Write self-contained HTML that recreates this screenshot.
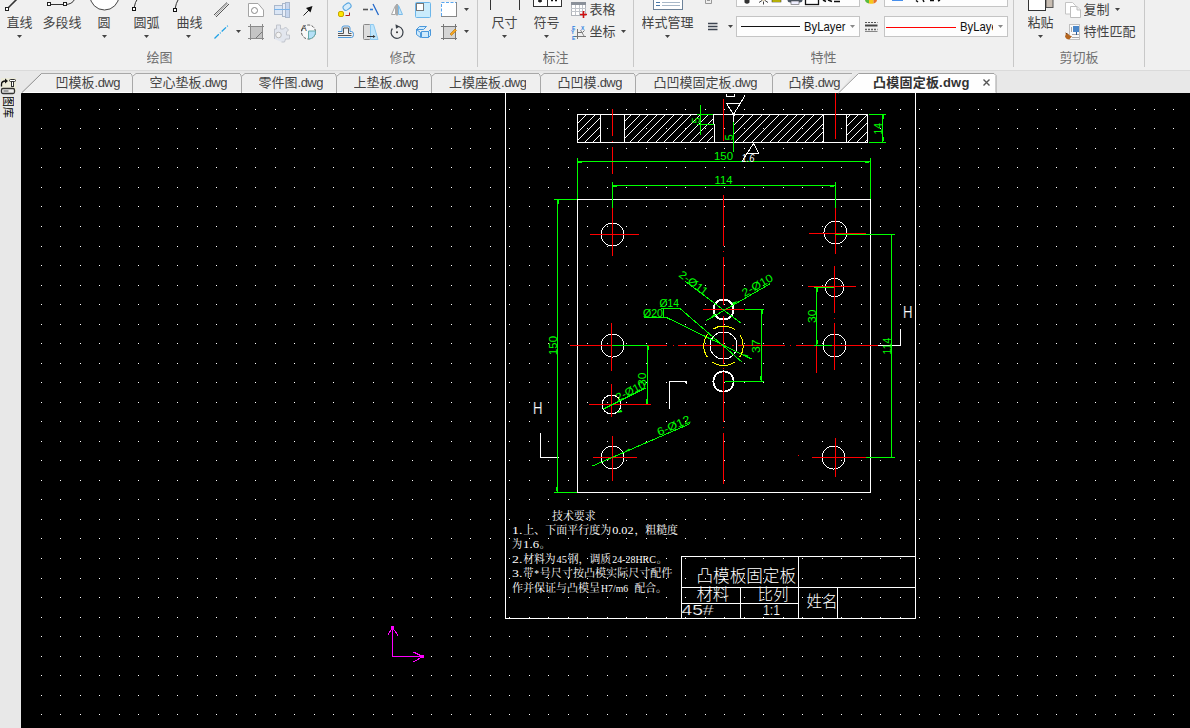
<!DOCTYPE html><html lang="zh"><head><meta charset="utf-8"><title>CAD</title><style>
html,body{margin:0;padding:0}
body{width:1190px;height:728px;overflow:hidden;background:#f0f0f0;position:relative;font-family:"Liberation Sans","Noto Sans CJK SC",sans-serif}
svg{position:absolute;left:0;top:0;display:block}
.l{position:absolute;white-space:nowrap;font-size:13px;line-height:18px;color:#444;overflow:hidden}
.g{color:#707070}
.by{color:#111;font-size:13px;transform:scaleX(0.87);transform-origin:0 0}
.sa{font-size:8.5px;color:#222;line-height:10px}
.tab{color:#444}
.tab i{font-style:normal;letter-spacing:-0.5px}
.act{font-weight:bold;color:#333;letter-spacing:0.22px}
.vt{writing-mode:vertical-rl;font-size:11px;line-height:13px;color:#222;width:13px;text-orientation:sideways;color:#000}
text{white-space:pre}
.cad{font-family:"Liberation Sans",sans-serif}
.song{font-family:"Liberation Serif","Noto Serif CJK SC",serif}
.cadcjk{font-family:"Liberation Sans","Noto Sans CJK SC",sans-serif;font-weight:300}
.ui{font-family:"Liberation Sans",sans-serif}
</style></head><body><svg class="cv" width="1190" height="728" viewBox="0 0 1190 728" shape-rendering="crispEdges"><rect x="21" y="93" width="1169" height="635" fill="#000"/><defs><path id="gr" d="M41 0h1M60 0h1M80 0h1M99 0h1M119 0h1M138 0h1M158 0h1M177 0h1M197 0h1M216 0h1M236 0h1M255 0h1M275 0h1M294 0h1M314 0h1M333 0h1M353 0h1M373 0h1M392 0h1M412 0h1M431 0h1M451 0h1M470 0h1M490 0h1M509 0h1M529 0h1M548 0h1M568 0h1M587 0h1M607 0h1M626 0h1M646 0h1M666 0h1M685 0h1M705 0h1M724 0h1M744 0h1M763 0h1M783 0h1M802 0h1M822 0h1M841 0h1M861 0h1M880 0h1M900 0h1M919 0h1M939 0h1M959 0h1M978 0h1M998 0h1M1017 0h1M1037 0h1M1056 0h1M1076 0h1M1095 0h1M1115 0h1M1134 0h1M1154 0h1M1173 0h1" stroke="#fff" stroke-width="1" fill="none"/></defs><use href="#gr" y="109.5"/><use href="#gr" y="128.5"/><use href="#gr" y="148.5"/><use href="#gr" y="167.5"/><use href="#gr" y="187.5"/><use href="#gr" y="206.5"/><use href="#gr" y="226.5"/><use href="#gr" y="246.5"/><use href="#gr" y="265.5"/><use href="#gr" y="285.5"/><use href="#gr" y="304.5"/><use href="#gr" y="324.5"/><use href="#gr" y="343.5"/><use href="#gr" y="363.5"/><use href="#gr" y="382.5"/><use href="#gr" y="402.5"/><use href="#gr" y="421.5"/><use href="#gr" y="441.5"/><use href="#gr" y="460.5"/><use href="#gr" y="480.5"/><use href="#gr" y="499.5"/><use href="#gr" y="519.5"/><use href="#gr" y="538.5"/><use href="#gr" y="558.5"/><use href="#gr" y="578.5"/><use href="#gr" y="597.5"/><use href="#gr" y="617.5"/><use href="#gr" y="636.5"/><use href="#gr" y="656.5"/><use href="#gr" y="675.5"/><use href="#gr" y="695.5"/><use href="#gr" y="714.5"/><clipPath id="h1"><rect x="578" y="115" width="22" height="27"/></clipPath><path clip-path="url(#h1)" d="M569.5 114.5L541.5 142.5M578.5 114.5L550.5 142.5M586.5 114.5L558.5 142.5M595.5 114.5L567.5 142.5M603.5 114.5L575.5 142.5M612.5 114.5L584.5 142.5M620.5 114.5L592.5 142.5" stroke="#fff" stroke-width="1" fill="none"/><clipPath id="h2"><rect x="625" y="115" width="88" height="27"/></clipPath><path clip-path="url(#h2)" d="M622.5 114.5L594.5 142.5M631.5 114.5L603.5 142.5M640.5 114.5L612.5 142.5M648.5 114.5L620.5 142.5M657.5 114.5L629.5 142.5M665.5 114.5L637.5 142.5M674.5 114.5L646.5 142.5M683.5 114.5L655.5 142.5M691.5 114.5L663.5 142.5M700.5 114.5L672.5 142.5M708.5 114.5L680.5 142.5M717.5 114.5L689.5 142.5M726.5 114.5L698.5 142.5M734.5 114.5L706.5 142.5" stroke="#fff" stroke-width="1" fill="none"/><clipPath id="h3"><rect x="734" y="115" width="89" height="27"/></clipPath><path clip-path="url(#h3)" d="M727.5 114.5L699.5 142.5M735.5 114.5L707.5 142.5M744.5 114.5L716.5 142.5M753.5 114.5L725.5 142.5M762.5 114.5L734.5 142.5M770.5 114.5L742.5 142.5M779.5 114.5L751.5 142.5M788.5 114.5L760.5 142.5M797.5 114.5L769.5 142.5M805.5 114.5L777.5 142.5M814.5 114.5L786.5 142.5M823.5 114.5L795.5 142.5M832.5 114.5L804.5 142.5M840.5 114.5L812.5 142.5M849.5 114.5L821.5 142.5" stroke="#fff" stroke-width="1" fill="none"/><clipPath id="h4"><rect x="847" y="115" width="20" height="27"/></clipPath><path clip-path="url(#h4)" d="M841.5 114.5L813.5 142.5M850.5 114.5L822.5 142.5M858.5 114.5L830.5 142.5M867.5 114.5L839.5 142.5M875.5 114.5L847.5 142.5M884.5 114.5L856.5 142.5M892.5 114.5L864.5 142.5" stroke="#fff" stroke-width="1" fill="none"/><g stroke="#fff" stroke-width="1" fill="none"><path d="M505.5 93V619M505 618.5H916M915.5 93V619M577 114.5H868M577 142.5H868M577.5 114V143M867.5 114V143M600.5 114V143M624.5 114V143M733.5 114V143M823.5 114V143M846.5 114V143M713.5 114V125M714.5 124V143M577 199.5H871M577 492.5H871M577.5 199V493M870.5 199V493M878 345.5H901M900.5 329V346M540.5 433V458M540 457.5H559M669 381.5H687M669.5 381V409M686.5 381V384M726.5 93.5L726.5 96.5M726.5 96.5L734.5 96.5M734.5 96.5L734.5 93.5M726.5 103.5L740.5 103.5M758.5 153.5L746.0 153.5M681 556.5H916M681 587.5H916M681 603.5H799M681.5 556V619M740.5 587V619M798.5 556V619M837.5 587V619"/><circle cx="612.5" cy="234.5" r="11.5"/><circle cx="835.5" cy="232.5" r="11.5"/><circle cx="612.5" cy="345.5" r="11.5"/><circle cx="834.5" cy="345.5" r="11.5"/><circle cx="612.5" cy="457.5" r="11.5"/><circle cx="833.5" cy="457.5" r="11.5"/><circle cx="834.5" cy="287.5" r="9.3"/><circle cx="611.5" cy="404.5" r="9.5"/><circle cx="723.5" cy="345.5" r="13.5"/><circle cx="723.5" cy="309.5" r="10" stroke-width="1.7"/><circle cx="723.5" cy="381.5" r="10.2" stroke-width="1.7"/><path stroke-width="1" d="M726.5 103.5L733.5 114.5"/><path stroke-width="1" d="M733.5 114.5L745.0 95.5"/><path stroke-width="1" d="M759.0 153.5L753.5 143.5"/><path stroke-width="1" d="M753.5 143.5L741.5 162.0"/></g><g stroke="#f00" stroke-width="1" fill="none"><path d="M612.5 109V136M612.5 141V142M612.5 147V174M723.5 99V141M835.5 93V139M612.5 208V256M590 234.5H639M611.5 323V371M611.5 384V417M589 404.5H651M612.5 436V481M593 457.5H637M570 345.5H667M673 345.5H674M678 345.5H726M732 345.5H734M738 345.5H785M790 345.5H791M796 345.5H878M723.5 195V246M723.5 251V252M723.5 257V305M723.5 316V364M723.5 368V369M723.5 372V422M723.5 427V428M723.5 433V484M703 309.5H744M835.5 208V254M809 233.5H866M834.5 266V313M834.5 318V319M834.5 323V370M808 286.5H856M816.5 345V373M835.5 438V477M812 457.5H866M798 455.5H799"/></g><g stroke="#0f0" stroke-width="1" fill="none"><path d="M577.5 158V199M870.5 158V199M577 161.5H870M578 162.5H582M865 162.5H869M612.5 182V208M835.5 182V208M612 185.5H835M613 186.5H617M830 186.5H834M554 199.5H577M554 492.5H577M557.5 199V492M558.5 200V204M556.5 487V491M835 234.5H895M866 457.5H895M891.5 234V457M869 114.5H886M869 142.5H886M882.5 114V142M883.5 115V119M883.5 137V141M700.5 105V135M697 114.5H713M697 124.5H714M733.5 122V152M814 287.5H834M814 345.5H832M816.5 287V345M817.5 288V292M817.5 340V344M745 309.5H764M725 381.5H764M761.5 309V381M760.5 376V380M762.5 310V314M612 345.5H648M647.5 345V404M646.5 399V404M648.5 346V350M660.5 308.5L680.0 308.5M643.5 317.5L666.5 317.5M663.5 309V317"/><path stroke-width="1" d="M685.5 281.5L741.5 323.5"/><path stroke-width="1" d="M706.5 320.5L770.5 283.5"/><path stroke-width="1" d="M680.0 308.5L742.5 362.5"/><path stroke-width="1" d="M666.5 317.5L751.5 359.0"/><path stroke-width="1" d="M603.5 409.0L645.5 388.0"/><path stroke-width="1" d="M592.5 466.0L690.5 423.5"/></g><g stroke="#ff0" stroke-width="1" fill="none"><path d=""/><circle cx="723.5" cy="345.8" r="19.7" stroke-dasharray="24.2 6.75" stroke-dashoffset="12.1"/></g><g stroke="#f0f" stroke-width="1" fill="none"><path d="M392.5 626V657M392 656.5H423"/><path stroke-width="1" d="M392.5 627.5L387.5 635.5"/><path stroke-width="1" d="M392.5 627.5L398.0 635.5"/><path stroke-width="1" d="M422.5 656.5L413.5 652.0"/><path stroke-width="1" d="M422.5 656.5L413.5 662.0"/></g><g fill="#0f0" stroke="none" shape-rendering="geometricPrecision"><path d="M710 318l4.5-4.5l1.5 2.5zM738 301l-4.5 4l-1.5-2.5zM742.5 354l6 1.5l-1 2.5zM616.5 413l4.5-3.5l1.5 2.5zM625 451.5l4-3l1 2.5z"/></g><g fill="#f0f"><rect x="391" y="626" width="3" height="3"/><rect x="421" y="655" width="3" height="3"/></g><g text-rendering="optimizeSpeed"><text x="714" y="160" font-size="11" fill="#0f0" class="cad" textLength="19" lengthAdjust="spacingAndGlyphs">150</text><text x="714.5" y="184" font-size="11" fill="#0f0" class="cad" textLength="18" lengthAdjust="spacingAndGlyphs">114</text><text x="557" y="355" font-size="11" fill="#0f0" class="cad" transform="rotate(-90 557 355)" textLength="19" lengthAdjust="spacingAndGlyphs">150</text><text x="890.5" y="354.5" font-size="11" fill="#0f0" class="cad" transform="rotate(-90 890.5 354.5)" textLength="17" lengthAdjust="spacingAndGlyphs">114</text><text x="881.5" y="134.5" font-size="11" fill="#0f0" class="cad" transform="rotate(-90 881.5 134.5)" textLength="11.5" lengthAdjust="spacingAndGlyphs">14</text><text x="700" y="123.5" font-size="11" fill="#0f0" class="cad" transform="rotate(-90 700 123.5)">5</text><text x="733" y="140.5" font-size="11" fill="#0f0" class="cad" transform="rotate(-90 733 140.5)">5</text><text x="816" y="323" font-size="11" fill="#0f0" class="cad" transform="rotate(-90 816 323)" textLength="13.5" lengthAdjust="spacingAndGlyphs">30</text><text x="760" y="353" font-size="11" fill="#0f0" class="cad" transform="rotate(-90 760 353)" textLength="13.5" lengthAdjust="spacingAndGlyphs">37</text><text x="646" y="386" font-size="11" fill="#0f0" class="cad" transform="rotate(-90 646 386)" textLength="13.5" lengthAdjust="spacingAndGlyphs">30</text><text x="659.5" y="307" font-size="11" fill="#0f0" class="cad" textLength="19.5" lengthAdjust="spacingAndGlyphs">Ø14</text><text x="643" y="316.5" font-size="11" fill="#0f0" class="cad" textLength="20" lengthAdjust="spacingAndGlyphs">Ø20</text><text x="678" y="276" font-size="11" fill="#0f0" class="cad" transform="rotate(37 678 276)" textLength="33" lengthAdjust="spacingAndGlyphs">2-Ø11</text><text x="744.5" y="297" font-size="11" fill="#0f0" class="cad" transform="rotate(-30 744.5 297)" textLength="34" lengthAdjust="spacingAndGlyphs">2-Ø10</text><text x="618" y="401.5" font-size="11" fill="#0f0" class="cad" transform="rotate(-27 618 401.5)" textLength="32" lengthAdjust="spacingAndGlyphs">2-Ø10</text><text x="659" y="436" font-size="11" fill="#0f0" class="cad" transform="rotate(-23.5 659 436)" textLength="35" lengthAdjust="spacingAndGlyphs">6-Ø12</text><text x="741.5" y="161.5" font-size="10.5" fill="#fff" class="cad" textLength="13" lengthAdjust="spacingAndGlyphs" font-style="italic">1.6</text><text x="903" y="318" font-size="16.5" fill="#fff" class="cad" textLength="9.5" lengthAdjust="spacingAndGlyphs" stroke="#000" stroke-width=".22">H</text><text x="533" y="414" font-size="16.5" fill="#fff" class="cad" textLength="9.5" lengthAdjust="spacingAndGlyphs" stroke="#000" stroke-width=".22">H</text><text y="520" font-size="11" fill="#fff" class="song"><tspan x="552" textLength="43.52" lengthAdjust="spacingAndGlyphs">技术要求</tspan></text><text y="533.5" font-size="11" fill="#fff" class="song"><tspan x="512" textLength="10.33" lengthAdjust="spacingAndGlyphs">1.</tspan><tspan x="523.13" textLength="88.04" lengthAdjust="spacingAndGlyphs">上、下面平行度为</tspan><tspan x="612.17" textLength="21.46" lengthAdjust="spacingAndGlyphs">0.02</tspan><tspan x="634.43" textLength="43.52" lengthAdjust="spacingAndGlyphs">，粗糙度</tspan></text><text y="548" font-size="11" fill="#fff" class="song"><tspan x="512" textLength="10.13" lengthAdjust="spacingAndGlyphs">为</tspan><tspan x="523.13" textLength="15.89" lengthAdjust="spacingAndGlyphs">1.6</tspan><tspan x="539.83" textLength="10.13" lengthAdjust="spacingAndGlyphs">。</tspan></text><text y="562.5" font-size="11" fill="#fff" class="song"><tspan x="512" textLength="10.33" lengthAdjust="spacingAndGlyphs">2.</tspan><tspan x="523.13" textLength="32.39" lengthAdjust="spacingAndGlyphs">材料为</tspan><tspan x="556.52" textLength="10.33" lengthAdjust="spacingAndGlyphs">45</tspan><tspan x="567.65" textLength="43.52" lengthAdjust="spacingAndGlyphs">钢，调质</tspan><tspan x="612.17" textLength="43.72" lengthAdjust="spacingAndGlyphs">24-28HRC</tspan><tspan x="656.69" textLength="10.13" lengthAdjust="spacingAndGlyphs">。</tspan></text><text y="577" font-size="11" fill="#fff" class="song"><tspan x="512" textLength="10.33" lengthAdjust="spacingAndGlyphs">3.</tspan><tspan x="523.13" textLength="10.13" lengthAdjust="spacingAndGlyphs">带</tspan><tspan x="534.26" textLength="4.77" lengthAdjust="spacingAndGlyphs">*</tspan><tspan x="539.83" textLength="132.56" lengthAdjust="spacingAndGlyphs">号尺寸按凸模实际尺寸配件</tspan></text><text y="591.5" font-size="11" fill="#fff" class="song"><tspan x="512" textLength="88.04" lengthAdjust="spacingAndGlyphs">作并保证与凸模呈</tspan><tspan x="601.04" textLength="27.03" lengthAdjust="spacingAndGlyphs">H7/m6</tspan><tspan x="634.43" textLength="32.39" lengthAdjust="spacingAndGlyphs">配合。</tspan></text><text x="696.5" y="582" font-size="16.5" fill="#fff" class="cadcjk" textLength="99.5" lengthAdjust="spacingAndGlyphs">凸模板固定板</text><text x="696.5" y="600" font-size="16" fill="#fff" class="cadcjk" textLength="32.5" lengthAdjust="spacingAndGlyphs">材料</text><text x="757.5" y="599.5" font-size="16" fill="#fff" class="cadcjk" textLength="31" lengthAdjust="spacingAndGlyphs">比列</text><text x="806.5" y="606.5" font-size="16" fill="#fff" class="cadcjk" textLength="31" lengthAdjust="spacingAndGlyphs">姓名</text><text x="681.5" y="615" font-size="15" fill="#fff" class="cadcjk" textLength="32" lengthAdjust="spacingAndGlyphs" stroke="#000" stroke-width=".22">45#</text><text x="763" y="614.5" font-size="14" fill="#fff" class="cadcjk" textLength="17" lengthAdjust="spacingAndGlyphs" stroke="#000" stroke-width=".22">1:1</text></g></svg><svg class="tb" width="1190" height="728" viewBox="0 0 1190 728"><rect x="0" y="70" width="1190" height="1" fill="#dadada"/><rect x="0" y="71" width="1190" height="22" fill="#e8e8e8"/><rect x="0" y="93" width="21" height="635" fill="#e8e8e8"/><path d="M21.5 93L41.5 73.5H853L838.5 93z" fill="#efefef"/><rect x="21" y="92" width="818" height="1" fill="#fff"/><path d="M838.5 93L858.5 73.5H994.5l1.5 1.5V93z" fill="#fefefe"/><path d="M838.5 93L858.5 73.5H994l2 2V93" fill="none" stroke="#a0a0a0"/><rect x="839.5" y="92" width="156" height="1" fill="#fdfdfd"/><path d="M21.5 93L41.5 73.5H131" stroke="#8c8c8c" fill="none"/><path d="M132.5 93V76.5l3.5-3H240" stroke="#a8a8a8" fill="none"/><path d="M130.5 73.5l1.5 1.5v1.5" stroke="#a8a8a8" fill="none"/><path d="M241.5 93V76.5l3.5-3H335" stroke="#a8a8a8" fill="none"/><path d="M239.5 73.5l1.5 1.5v1.5" stroke="#a8a8a8" fill="none"/><path d="M336.5 93V76.5l3.5-3H430" stroke="#a8a8a8" fill="none"/><path d="M334.5 73.5l1.5 1.5v1.5" stroke="#a8a8a8" fill="none"/><path d="M431.5 93V76.5l3.5-3H539" stroke="#a8a8a8" fill="none"/><path d="M429.5 73.5l1.5 1.5v1.5" stroke="#a8a8a8" fill="none"/><path d="M540.5 93V76.5l3.5-3H634" stroke="#a8a8a8" fill="none"/><path d="M538.5 73.5l1.5 1.5v1.5" stroke="#a8a8a8" fill="none"/><path d="M635.5 93V76.5l3.5-3H771" stroke="#a8a8a8" fill="none"/><path d="M633.5 73.5l1.5 1.5v1.5" stroke="#a8a8a8" fill="none"/><path d="M772.5 93V76.5l3.5-3H852" stroke="#a8a8a8" fill="none"/><path d="M770.5 73.5l1.5 1.5v1.5" stroke="#a8a8a8" fill="none"/><path d="M41.5 73.5H130.5" stroke="#a8a8a8" fill="none"/><path d="M983.5 79.5l6 6M989.5 79.5l-6 6" stroke="#555" stroke-width="1.400" fill="none"/><rect x="1" y="78" width="15" height="14" fill="#ecebd9"/><path d="M1.5 86.5v-2q0-3.5 4-3.5" stroke="#111" stroke-width="1.300" fill="none"/><path d="M5 78.5l3 2.5l-3 2.5z" fill="#111"/><rect x="9.5" y="79.5" width="6" height="2" rx="1" fill="#fff" stroke="#333"/><rect x="11.5" y="81.5" width="2" height="5" fill="#fff" stroke="#333"/><rect x="1.5" y="88.5" width="13" height="5" rx="1.5" fill="#eee" stroke="#333" stroke-width="1.300"/><path d="M3.5 91h5" stroke="#555"/></svg><svg class="rb" width="1190" height="70" viewBox="0 0 1190 70"><rect x="327" y="0" width="1" height="67" fill="#c8c8c8"/><rect x="477" y="0" width="1" height="67" fill="#c8c8c8"/><rect x="633" y="0" width="1" height="67" fill="#c8c8c8"/><rect x="1013" y="0" width="1" height="67" fill="#c8c8c8"/><rect x="1144" y="0" width="1" height="67" fill="#c8c8c8"/><path d="M17.0 35h5l-2.5 3z" fill="#444"/><path d="M102.0 35h5l-2.5 3z" fill="#444"/><path d="M144.0 35h5l-2.5 3z" fill="#444"/><path d="M186.0 35h5l-2.5 3z" fill="#444"/><path d="M502.0 35h5l-2.5 3z" fill="#444"/><path d="M544.0 35h5l-2.5 3z" fill="#444"/><path d="M665.0 35h5l-2.5 3z" fill="#444"/><path d="M1038.0 35h5l-2.5 3z" fill="#444"/><path d="M236.0 30h5l-2.5 3z" fill="#444"/><path d="M464.0 8h5l-2.5 3z" fill="#444"/><path d="M464.0 30h5l-2.5 3z" fill="#444"/><path d="M621.0 30h5l-2.5 3z" fill="#444"/><path d="M728.0 25h5l-2.5 3z" fill="#444"/><path d="M1115.0 8h5l-2.5 3z" fill="#444"/><path d="M7.5 8.5L17 -1" stroke="#333" stroke-width="1.6" fill="none"/><rect x="5.5" y="7.5" width="3" height="3" fill="#fff" stroke="#222"/><path d="M50 4.5h15q7 0 9.5-5" stroke="#333" fill="none"/><rect x="47.5" y="2.5" width="3" height="3" fill="#fff" stroke="#222"/><rect x="63.5" y="2.5" width="3" height="3" fill="#fff" stroke="#222"/><circle cx="104.5" cy="-4.5" r="14.5" fill="#fff" stroke="#444"/><path d="M134 8q1-6 4-10" stroke="#333" fill="none"/><rect x="132.5" y="7.5" width="3" height="3" fill="#fff" stroke="#111" /><path d="M175 9q1-6 3.5-10" stroke="#333" fill="none"/><rect x="173.5" y="8.5" width="3" height="3" fill="#fff" stroke="#111"/><path d="M214 15L227 2.5M216 17L229 4" stroke="#555" stroke-width="1" fill="none"/><path d="M215 16L228 3.200" stroke="#aaa" stroke-width="1" fill="none"/><path d="M214.5 38.5L228.5 25" stroke="#1da1e6" stroke-width="1.300" stroke-dasharray="6 1.5 1 1.5" fill="none"/><path d="M248.5 3.5h9.5l5.5 6.5v6.5h-15z" fill="#fff" stroke="#a4a4a4"/><circle cx="254.5" cy="10.5" r="3" fill="#fff" stroke="#888"/><rect x="274.5" y="5.5" width="8" height="9" fill="#dbe6f5" stroke="#aab8cc"/><rect x="282.5" y="3.5" width="3" height="13" fill="#e8eef8" stroke="#aab8cc"/><rect x="285.5" y="2.5" width="4" height="15" fill="#c7d6ee" stroke="#aab8cc"/><path d="M274 9.5h16" stroke="#7ab4ea"/><path d="M303.5 15.5L310 9" stroke="#222" fill="none"/><path d="M312.5 6l-2 6.5l-4.5-4.5z" fill="#111"/><rect x="250" y="27" width="12" height="11" fill="#c4c4c4"/><path d="M248 26.5h16M248 38.5h16M250.5 24v16M262.5 24v16" stroke="#8a8a8a" fill="none"/><path d="M256 38l6-6" stroke="#777"/><path d="M274.5 39v-10h2v-4h4v4h3l2-2l3 3l-2 2v3h3v4h-4l-1 3h-3" fill="#e2e6ee" stroke="#c0c4cc"/><circle cx="278.5" cy="35" r="2.800" fill="#f4f4f4" stroke="#bbb"/><circle cx="308.5" cy="32" r="7" fill="#f8f8f8" stroke="#555" stroke-dasharray="3 1.5"/><path d="M308.5 31h7a7 7 0 0 1 -7 8z" fill="#b5e0f7" stroke="#6aa"/><rect x="338.5" y="11.5" width="5" height="5" rx="1.5" fill="#ffe600" stroke="#c8a800"/><rect x="343" y="4" width="8.5" height="5.5" rx="2.700" transform="rotate(-35 347 7)" fill="#d6ecfb" stroke="#58a6e0"/><path d="M345.5 15.5h4v-3" stroke="#b02020" fill="none"/><path d="M338 33.5h5.5v-5.5h5v5.5h3M338 35.5h13.5" stroke="#555" fill="none"/><path d="M338 31.5h4v-3.5q0-2 2-2h4q2 0 2 2v3.5h1.5q2 0 2 3t-2 3h-13.5" stroke="#3a8fd8" stroke-width=".9" fill="none"/><path d="M363 9.5h5" stroke="#555" stroke-width="1.600"/><path d="M370 9.5h3" stroke="#2d7ad6" stroke-width="1.600"/><path d="M373 4l5.5 11" stroke="#1f66c8" stroke-width="1.300"/><path d="M395.5 5.5v9h-4z" fill="#fff" stroke="#aaa"/><path d="M398.5 5.5v9h4z" fill="#c5e6fa" stroke="#7bbcea"/><path d="M397 4v11.5" stroke="#999" stroke-width="1.600"/><rect x="415.5" y="2.5" width="15" height="15" rx="1" fill="#c9ebfc" stroke="#6cb6ea"/><rect x="416.5" y="3.5" width="7" height="7" fill="#fff" stroke="#777"/><rect x="441.5" y="2.5" width="15" height="14" fill="#fff" stroke="#888"/><path d="M441.5 16V2.5H456" stroke="#fff" fill="none"/><path d="M441.5 16V2.5H456" stroke="#58a6f0" stroke-dasharray="3 1.5" fill="none"/><rect x="363.5" y="24.5" width="7" height="15" rx="1" fill="#ddd" stroke="#888"/><path d="M370.5 24.5h3l4.5 15h-7.5z" fill="#bfe5fb" stroke="#8cc8f0"/><path d="M367 36.5h7" stroke="#333"/><path d="M375.5 36.5l-2.5-1.5v3z" fill="#333"/><path d="M398.6 26.5A6 6 0 1 1 392.4 28.5" stroke="#3a4048" stroke-width="1.2" fill="none"/><path d="M395.5 24.2l4.2 2.3l-3.7 2.3z" fill="#3a4048"/><circle cx="397" cy="32.3" r="1" fill="#333"/><path d="M416.5 29.5l3-3h7l-3 3zM416.5 29.5v5l4 3v-5zM421.5 31.5h7v6h-7zM428.5 31.5l2-2v6l-2 2" fill="#cfeafc" stroke="#3a8fd8" stroke-width="0.900"/><rect x="443" y="26" width="13" height="12" fill="#d4d4d4"/><path d="M441 26.5h16M441 38.5h16M443.5 24v16M455.5 24v16" stroke="#777" fill="none"/><path d="M450 34l5-5l1.5 1.5l-5 5z" fill="#f5a623" stroke="#b87400" stroke-width=".6"/><path d="M490.5 0v10M519.5 0v10" stroke="#333"/><rect x="533.5" y="-5.5" width="28" height="12" fill="#fff" stroke="#333"/><path d="M547.5 0v7" stroke="#333"/><path d="M538 1h4M540 0v2.5M551 0.5h2M555 0.5h2" stroke="#111" stroke-width="1.400"/><rect x="571.5" y="2.5" width="14" height="13" fill="#fff" stroke="#b0b4ba"/><rect x="571" y="2" width="15" height="3" fill="#8a9099"/><path d="M571 8.5h15M571 11.5h15M575.5 5v10M579.5 5v10M582.5 5v10" stroke="#c0c4ca"/><path d="M580 14.5h7M583.5 11v7" stroke="#d01010" stroke-width="1.600"/><path d="M577.5 29v10M574 36.5h12M577.5 32.5h5l2-2" stroke="#777" fill="none"/><path d="M580.5 30l3.5 6" stroke="#888"/><text x="572" y="30" font-size="5" fill="#2a7fe0" font-weight="bold" class="ui">E</text><text x="581" y="30" font-size="5" fill="#2a7fe0" font-weight="bold" class="ui">X</text><text x="571" y="34" font-size="5" fill="#2a7fe0" font-weight="bold" class="ui">Y</text><text x="572" y="39.5" font-size="5" fill="#2a7fe0" font-weight="bold" class="ui">E</text><rect x="653.5" y="-4.5" width="29" height="14" fill="#fff" stroke="#6d8299"/><path d="M656 2.5h4M656 5.5h4" stroke="#4a78a8" stroke-width="1.200"/><path d="M662 2.5h18M662 5.5h18" stroke="#a8b8c8"/><path d="M705.5 0v3.5h6V0" stroke="#999" fill="#eee"/><path d="M707 0.5h3" stroke="#999"/><path d="M708 23.5h9.5M708 26.5h9.5M708 29.5h9.5" stroke="#3d4450" stroke-width="1.300"/><rect x="736.5" y="-14.5" width="123" height="21" fill="#fdfdfd" stroke="#c4c4c4"/><rect x="736.5" y="16.5" width="123" height="20" fill="#fdfdfd" stroke="#c4c4c4"/><rect x="884.5" y="-14.5" width="123" height="21" fill="#fdfdfd" stroke="#c4c4c4"/><rect x="884.5" y="16.5" width="123" height="20" fill="#fdfdfd" stroke="#c4c4c4"/><path d="M850.0 25h5l-2.5 3z" fill="#888"/><path d="M998.0 25h5l-2.5 3z" fill="#888"/><path d="M741 26.5h59" stroke="#111" stroke-width="1.200"/><path d="M886 27.5h70" stroke="#f00" stroke-width="1.200"/><path d="M744.5 0v2.5q2.5 2.5 5 0V0z" fill="#333"/><path d="M759 2.5l4.5-3l4.5 3M763.5 1.5v3" stroke="#444" fill="none"/><circle cx="763.5" cy="-1" r="2" fill="#f5e6c8"/><rect x="772" y="0" width="9" height="2" fill="#e8e000" stroke="#222" stroke-width=".5"/><path d="M787.5 0q0 2.5 3 2.5h9q3 0 3-2.5z" fill="#4a5563"/><rect x="791" y="1" width="8" height="3.5" fill="#eef" stroke="#555" stroke-width=".6"/><rect x="805.5" y="-8.5" width="13" height="13" fill="#fff" stroke="#111" stroke-width="1.300"/><path d="M823 0l3 1.5M828 0l4 1.5M834 1.5h6" stroke="#111" stroke-width="1.600"/><path d="M865 0a6 4 0 0 0 4 3.5V0z" fill="#5aba3c"/><path d="M869 3.5a6 4 0 0 0 4.5 0V0H869z" fill="#f7c61a"/><path d="M873.5 3.5a6 4 0 0 0 3.5-3.5h-3.5z" fill="#e8742a"/><path d="M892 0h11" stroke="#1a73e8" stroke-width="1.600"/><path d="M916 0.5l2 1.5M923 0l1 2M930 0.5l4 0M938 1l2-1" stroke="#111" stroke-width="1.5"/><path d="M865 22.5h12.5" stroke="#555" stroke-dasharray="2 1"/><path d="M865 25.5h12.5" stroke="#444" stroke-width="2"/><path d="M865 29.5h12.5" stroke="#666" stroke-dasharray="2 1" stroke-width="1.5"/><path d="M865 31.5h12.5" stroke="#888"/><rect x="1046" y="-3" width="7" height="10.5" fill="#c8bdb2" stroke="#555"/><rect x="1028.5" y="-5.5" width="17" height="16" fill="#fff" stroke="#333"/><path d="M1065.5 2.5h7l3 3v8.5h-10z" fill="#fff" stroke="#c4c4c4"/><path d="M1070.5 6.5h6.5l3.5 3.5v7.5h-10z" fill="#fff" stroke="#bdbdbd"/><path d="M1077 6.5v3.5h3.5" fill="#eee" stroke="#bdbdbd"/><rect x="1069.5" y="24.5" width="10" height="15" fill="#fafafa" stroke="#c0c0c0"/><rect x="1073" y="26" width="6" height="6" fill="#4a86c8"/><path d="M1071.5 27v5M1072 34.5h7M1072 37.5h7" stroke="#aaa"/><path d="M1076.5 32v3" stroke="#2a5a98"/><path d="M1066 33.5l6 3l-3 3q-3 0-4-3z" fill="#b5651d"/><path d="M1065.5 33l3 1.5" stroke="#7a3e10"/></svg><span class="l" style="left:6.5px;top:14px;">直线</span><span class="l" style="left:42.5px;top:14px;">多段线</span><span class="l" style="left:97.5px;top:14px;">圆</span><span class="l" style="left:133.5px;top:14px;">圆弧</span><span class="l" style="left:176.5px;top:14px;">曲线</span><span class="l" style="left:491.5px;top:14px;">尺寸</span><span class="l" style="left:533.5px;top:14px;">符号</span><span class="l" style="left:641.5px;top:14px;">样式管理</span><span class="l" style="left:1027.5px;top:14px;">粘贴</span><span class="l" style="left:589.5px;top:1px;">表格</span><span class="l" style="left:589.5px;top:23px;">坐标</span><span class="l" style="left:1083.5px;top:1px;">复制</span><span class="l" style="left:1083.5px;top:23px;">特性匹配</span><span class="l g" style="left:146.5px;top:49px;">绘图</span><span class="l g" style="left:389.5px;top:49px;">修改</span><span class="l g" style="left:542.5px;top:49px;">标注</span><span class="l g" style="left:810.5px;top:49px;">特性</span><span class="l g" style="left:1059.5px;top:49px;">剪切板</span><span class="l by" style="left:804px;top:17.5px;">ByLayer</span><span class="l by" style="left:960px;top:17.5px;width:38px;">ByLayer</span><span class="l sa" style="left:301px;top:23px;">A</span><span class="l tab" style="left:55.5px;top:74px;">凹模板<i>.dwg</i></span><span class="l tab" style="left:149.5px;top:74px;">空心垫板<i>.dwg</i></span><span class="l tab" style="left:258.5px;top:74px;">零件图<i>.dwg</i></span><span class="l tab" style="left:353.5px;top:74px;">上垫板<i>.dwg</i></span><span class="l tab" style="left:449.0px;top:74px;">上模座板<i>.dwg</i></span><span class="l tab" style="left:557.5px;top:74px;">凸凹模<i>.dwg</i></span><span class="l tab" style="left:653.5px;top:74px;">凸凹模固定板<i>.dwg</i></span><span class="l tab" style="left:788.5px;top:74px;">凸模<i>.dwg</i></span><span class="l tab act" style="left:873px;top:74px;">凸模固定板.dwg</span><span class="l vt" style="left:1px;top:96px;">图库</span></body></html>
